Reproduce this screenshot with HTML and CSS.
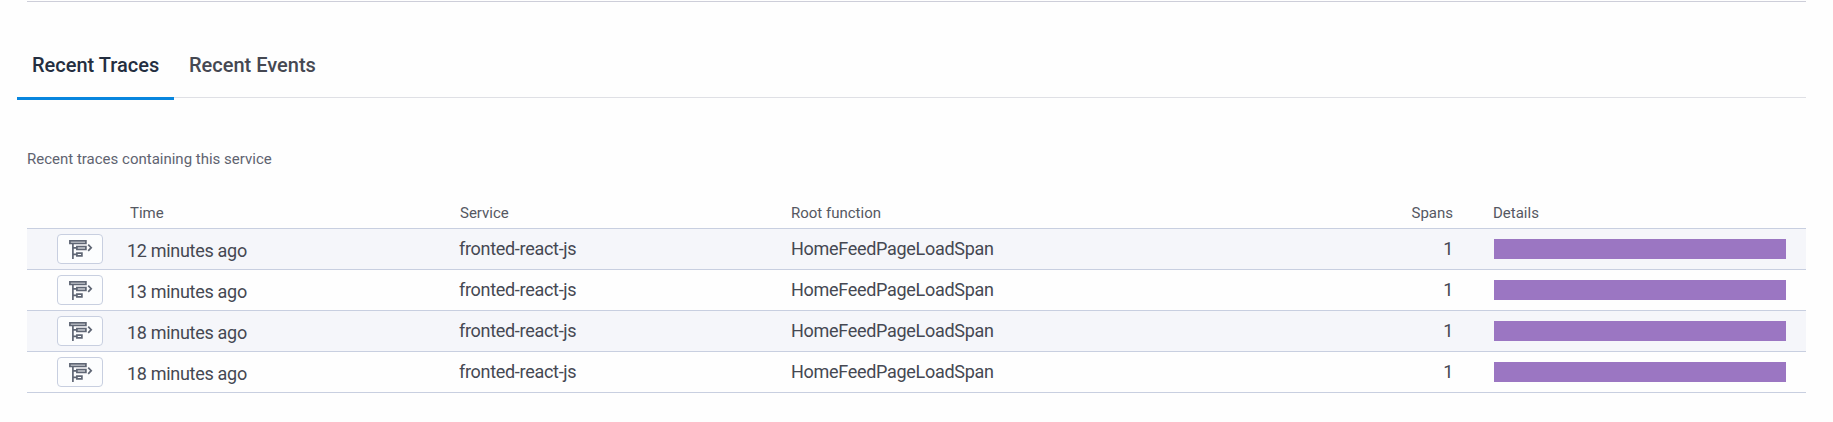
FILE: index.html
```html
<!DOCTYPE html>
<html lang="en">
<head>
<meta charset="utf-8">
<title>Recent Traces</title>
<link rel="stylesheet" href="styles.css">
</head>
<body>
<svg class="symbols" aria-hidden="true">
  <symbol id="trace" viewBox="0 0 24 20">
    <path d="M.9 1.8h16v2.6h-16zM3.9 4.5V20M3.9 8.9h3.5M3.9 15.4h3.5M7.9 7.6h9v2.7h-9zM7.9 14.1h5v2.7h-5zM19.2 5.6l3 3.1-3 3.1" fill="none" stroke="#5f6674" stroke-width="1.7"/>
  </symbol>
</svg>
<main class="panel">
  <hr class="divider">
  <nav class="tabs">
    <a class="tab tab-active">Recent Traces</a>
    <a class="tab">Recent Events</a>
  </nav>
  <p class="caption">Recent traces containing this service</p>
  <section class="traces">
    <div class="row head"><span></span><span class="time">Time</span><span class="service">Service</span><span class="root">Root function</span><span class="spans">Spans</span><span class="details">Details</span></div>
    <div class="row shaded"><button class="open" aria-label="Open trace"><svg class="icon"><use href="#trace"/></svg></button><span class="time">12 minutes ago</span><span class="service">fronted-react-js</span><span class="root">HomeFeedPageLoadSpan</span><span class="spans">1</span><span class="bar"></span></div>
    <div class="row"><button class="open" aria-label="Open trace"><svg class="icon"><use href="#trace"/></svg></button><span class="time">13 minutes ago</span><span class="service">fronted-react-js</span><span class="root">HomeFeedPageLoadSpan</span><span class="spans">1</span><span class="bar"></span></div>
    <div class="row shaded"><button class="open" aria-label="Open trace"><svg class="icon"><use href="#trace"/></svg></button><span class="time">18 minutes ago</span><span class="service">fronted-react-js</span><span class="root">HomeFeedPageLoadSpan</span><span class="spans">1</span><span class="bar"></span></div>
    <div class="row"><button class="open" aria-label="Open trace"><svg class="icon"><use href="#trace"/></svg></button><span class="time">18 minutes ago</span><span class="service">fronted-react-js</span><span class="root">HomeFeedPageLoadSpan</span><span class="spans">1</span><span class="bar"></span></div>
  </section>
</main>
</body>
</html>
```
FILE: styles.css
```css
* { box-sizing: border-box; }
body { margin: 0; background: #fefefe; color: #454852; font-family: Roboto, sans-serif; font-size: 18px; font-weight: 400; }
.symbols { display: none; }
.panel { padding: 1px 27px 0; }
.divider { height: 1px; margin: 0; border: 0; background: #cdced9; }
.tabs { display: flex; height: 98px; margin-left: -10px; align-items: flex-end; background: linear-gradient(#dfe0e5, #dfe0e5) 0 95px / 100% 1px no-repeat; }
.tab { height: 47px; padding: 0 15px; font-size: 20px; font-weight: 500; line-height: 24px; color: #454852; border-bottom: 3px solid transparent; white-space: nowrap; }
.tab-active { width: 157px; color: #242e40; border-bottom-color: #0886de; }
.caption { margin: 49px 0 0; font-size: 15px; line-height: 20px; color: #606370; }
.traces { margin-top: 29px; }
.row { display: grid; grid-template-columns: 100px 332px 332px 562px 100px 41px 292px; height: 41px; align-items: center; border-bottom: 1px solid #c8cfe0; line-height: 22px; letter-spacing: -0.3px; }
.head { height: 31px; font-size: 15px; color: #555862; letter-spacing: 0; }
.shaded { background: #f5f6fa; }
.open { display: flex; width: 46px; height: 30px; margin: 0 0 0 30px; padding: 4px 0 0 11px; background: #fcfdfe; border: 1px solid #c8cfe0; border-radius: 4px; }
.icon { width: 24px; height: 20px; }
.time { padding-top: 3px; }
.spans { text-align: right; }
.bar, .details { grid-column: 7; }
.bar { height: 20px; background: #9b76c2; }
.head .time { padding: 0 0 0 3px; }
.head .service { padding-left: 1px; }
.head .details { margin-left: -1px; }
```
